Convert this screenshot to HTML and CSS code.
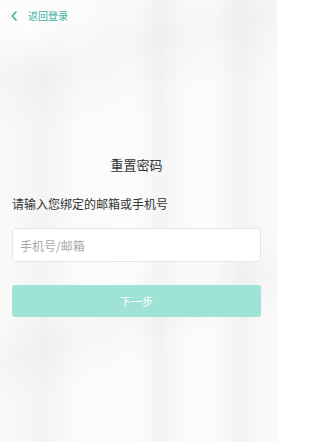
FILE: index.html
```html
<!DOCTYPE html>
<html lang="zh">
<head>
<meta charset="utf-8">
<title>重置密码</title>
<link rel="stylesheet" href="styles.css">
</head>
<body>
<div class="page">
  <div class="bg"></div>
  <header class="topbar">
    <svg class="chev" width="8" height="10" viewBox="0 0 8 10"><path d="M6 1 L2.2 5 L6 9" fill="none" stroke="#3cb39e" stroke-width="1.6" stroke-linecap="round" stroke-linejoin="round"/></svg>
    <span class="back">返回登录</span>
  </header>
  <main class="content">
    <h1 class="title">重置密码</h1>
    <p class="label">请输入您绑定的邮箱或手机号</p>
    <div class="input"><span class="placeholder">手机号/邮箱</span></div>
    <div class="btn">下一步</div>
  </main>
</div>
</body>
</html>
```

FILE: styles.css
```css
html, body {
  margin: 0;
  padding: 0;
}
body {
  width: 281px;
  height: 442px;
  overflow: hidden;
  font-family: "Noto Sans CJK SC", "Noto Sans", sans-serif;
  background: #ffffff;
}
.page {
  position: relative;
  width: 277px;
  height: 442px;
  box-sizing: border-box;
  padding: 0 16px 0 12px;
  background: #f7f7f7;
}
.bg {
  position: absolute;
  inset: 0;
  z-index: 0;
  background:
    radial-gradient(ellipse 80px 60px at 30px 20px, rgba(255,255,255,0.9), rgba(255,255,255,0)),
    linear-gradient(168deg, rgba(0,0,0,0) 10px, rgba(0,0,0,0.025) 70px, rgba(0,0,0,0) 140px),
    linear-gradient(162deg, rgba(0,0,0,0) 300px, rgba(0,0,0,0.02) 345px, rgba(0,0,0,0) 390px),
    linear-gradient(90deg,
      rgba(255,255,255,0.4) 0px, rgba(0,0,0,0.012) 45px, rgba(255,255,255,0.5) 80px,
      rgba(255,255,255,0.6) 135px, rgba(0,0,0,0.01) 160px, rgba(255,255,255,0.55) 185px,
      rgba(255,255,255,0.6) 215px, rgba(0,0,0,0.014) 240px, rgba(255,255,255,0.4) 270px);
}
.topbar, .content {
  position: relative;
  z-index: 1;
}
.topbar {
  height: 32px;
  display: flex;
  align-items: center;
  gap: 10px;
}
.chev {
  display: block;
  margin-left: -2px;
}
.back {
  font-size: 10px;
  color: #3cb39e;
  line-height: 14px;
}
.content {
  display: flex;
  flex-direction: column;
}
.title {
  margin: 123px 0 0;
  font-size: 13px;
  font-weight: normal;
  line-height: 20px;
  color: #333;
  text-align: center;
}
.label {
  margin: 20px 0 0;
  font-size: 12px;
  line-height: 18px;
  color: #333;
}
.input {
  margin-top: 15px;
  height: 34px;
  box-sizing: border-box;
  background: #fff;
  border: 1px solid #e6e6e6;
  border-radius: 4px;
  display: flex;
  align-items: center;
  padding-left: 7px;
}
.placeholder {
  font-size: 12px;
  color: #a8a8a8;
}
.btn {
  margin-top: 23px;
  height: 32px;
  border-radius: 3px;
  background: #9fe3d6;
  color: #fff;
  font-size: 11px;
  display: flex;
  align-items: center;
  justify-content: center;
}
```
